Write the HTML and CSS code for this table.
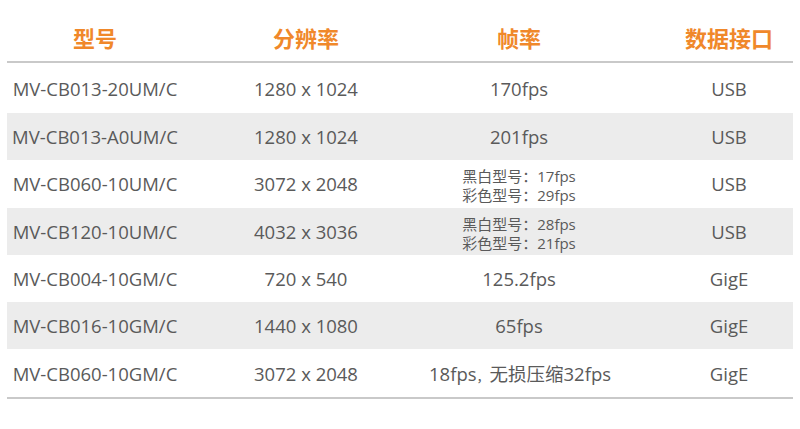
FILE: index.html
```html
<!DOCTYPE html>
<html lang="zh-CN">
<head>
<meta charset="utf-8">
<link rel="stylesheet" href="styles.css">
</head>
<body>
<div class="table">
  <div class="row head">
    <div class="c c1">型号</div>
    <div class="c c2">分辨率</div>
    <div class="c c3">帧率</div>
    <div class="c c4">数据接口</div>
  </div>
  <div class="row first">
    <div class="c c1">MV-CB013-20UM/C</div>
    <div class="c c2">1280 x 1024</div>
    <div class="c c3">170fps</div>
    <div class="c c4">USB</div>
  </div>
  <div class="row alt">
    <div class="c c1">MV-CB013-A0UM/C</div>
    <div class="c c2">1280 x 1024</div>
    <div class="c c3">201fps</div>
    <div class="c c4">USB</div>
  </div>
  <div class="row">
    <div class="c c1">MV-CB060-10UM/C</div>
    <div class="c c2">3072 x 2048</div>
    <div class="c c3"><div class="multi"><span>黑白型号：17fps</span><span>彩色型号：29fps</span></div></div>
    <div class="c c4">USB</div>
  </div>
  <div class="row alt">
    <div class="c c1">MV-CB120-10UM/C</div>
    <div class="c c2">4032 x 3036</div>
    <div class="c c3"><div class="multi"><span>黑白型号：28fps</span><span>彩色型号：21fps</span></div></div>
    <div class="c c4">USB</div>
  </div>
  <div class="row">
    <div class="c c1">MV-CB004-10GM/C</div>
    <div class="c c2">720 x 540</div>
    <div class="c c3">125.2fps</div>
    <div class="c c4">GigE</div>
  </div>
  <div class="row alt">
    <div class="c c1">MV-CB016-10GM/C</div>
    <div class="c c2">1440 x 1080</div>
    <div class="c c3">65fps</div>
    <div class="c c4">GigE</div>
  </div>
  <div class="row last">
    <div class="c c1">MV-CB060-10GM/C</div>
    <div class="c c2">3072 x 2048</div>
    <div class="c c3">18fps<span class="comma">，</span>无损压缩32fps</div>
    <div class="c c4">GigE</div>
  </div>
</div>
</body>
</html>
```
FILE: styles.css
```css
html, body {
  margin: 0;
  padding: 0;
  background: #ffffff;
}
body {
  font-family: "Open Sans", "Noto Sans CJK SC", sans-serif;
  color: #5a5a5a;
}
.table {
  margin-left: 7px;
  width: 786px;
}
.row {
  display: grid;
  grid-template-columns: 176px 246px 236px 128px;
  height: 47.3px;
  align-items: center;
  font-size: 18.5px;
}
.row.first {
  height: 50px;
}
.row.alt {
  background: #ececec;
}
.row.last {
  border-bottom: 2px solid #c9c9c9;
}
.row.head {
  height: 61px;
  align-items: start;
  border-bottom: 2px solid #c9c9c9;
  color: #f0882a;
  font-weight: 700;
  font-size: 22px;
}
.row.head .c {
  padding-top: 25px;
  line-height: 26px;
}
.c {
  text-align: center;
  white-space: nowrap;
}
.c3 {
  padding-right: 56px;
}
.comma {
  font-size: 13px;
}
.multi {
  display: inline-flex;
  flex-direction: column;
  align-items: flex-start;
  font-size: 15px;
  line-height: 19px;
  margin-top: -4px;
}
```
